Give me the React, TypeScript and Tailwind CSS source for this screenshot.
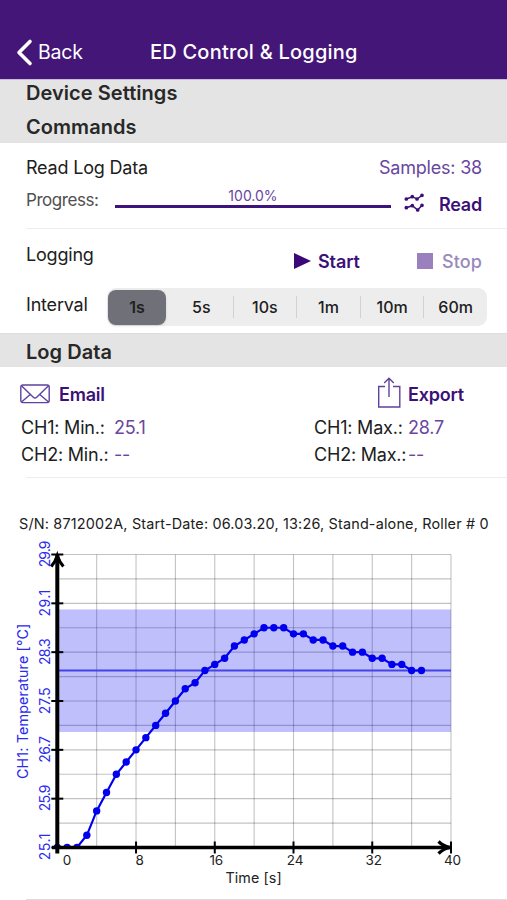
import React from "react";

const temps = [
  25.1, 25.1, 25.1, 25.3, 25.7, 26.0, 26.3, 26.5, 26.7, 26.9, 27.1, 27.3, 27.5,
  27.7, 27.8, 28.0, 28.1, 28.2, 28.4, 28.5, 28.6, 28.7, 28.7, 28.7, 28.6, 28.6,
  28.5, 28.5, 28.4, 28.4, 28.3, 28.3, 28.2, 28.2, 28.1, 28.1, 28.0, 28.0,
];

// Chart space: origin at (57.3, 307.5), 393.7 wide and 293 high
const px = (t: number) => 57.3 + t * 9.842;
const py = (v: number) => 307.5 - (v - 25.1) * 61.04;

function Chart() {
  const points = temps.map((v, i) => `${px(i)},${py(v)}`).join(" ");
  const yTicks = [25.1, 25.9, 26.7, 27.5, 28.3, 29.1, 29.9];
  const yLabelCenters = [307, 258, 209.5, 161, 111.8, 63.3, 14];
  const xLabels = [
    [0, 67],
    [8, 139.5],
    [16, 216.3],
    [24, 295],
    [32, 373.7],
    [40, 452.5],
  ];
  return (
    <svg width="507" height="359" viewBox="0 0 507 359" className="block font-['Inter',sans-serif]">
      <g stroke="#000" strokeOpacity="0.24" strokeWidth="1.1">
        {Array.from({ length: 10 }, (_, i) => (
          <line key={i} x1={px(4 * (i + 1))} x2={px(4 * (i + 1))} y1="14.5" y2="307" />
        ))}
        {Array.from({ length: 12 }, (_, i) => (
          <line key={i} x1="57" x2="451" y1={py(25.5 + 0.4 * i)} y2={py(25.5 + 0.4 * i)} />
        ))}
      </g>
      <rect x="57.3" y={py(29)} width="393.7" height="122.5" fill="#0000f0" fillOpacity="0.25" />
      <line x1="57.3" x2="451" y1={py(28)} y2={py(28)} stroke="#4444e8" strokeWidth="1.8" />
      <clipPath id="plot">
        <rect x="52" y="0" width="410" height="308.5" />
      </clipPath>
      <g clipPath="url(#plot)" fill="#0000ee">
        <polyline points={points} fill="none" stroke="#0000ee" strokeWidth="2.2" />
        {temps.map((v, i) => (
          <circle key={i} cx={px(i)} cy={py(v)} r="3.7" />
        ))}
      </g>
      <g stroke="#000" fill="none">
        <path d="M57.3 313.5V15" strokeWidth="4" />
        <path d="M52 307.5H450" strokeWidth="3.6" />
        <path d="M51.2 26.5Q55.5 21.5 57.3 16Q59.1 21.5 63.4 26.5" strokeWidth="3.2" />
        <path d="M54.5 20L57.3 14.5L60.1 20Z" fill="#000" />
        <path d="M438.5 301.5Q443 306 450 307.5Q443 309 438.5 313.5" strokeWidth="3.2" />
        {yTicks.map((v) => (
          <path key={v} d={`M51.3 ${py(v)}H63.3`} strokeWidth="2" />
        ))}
        {[8, 16, 24, 32, 40].map((t) => (
          <path key={t} d={`M${px(t)} 301.5V313.5`} strokeWidth="2" />
        ))}
      </g>
      <g fontSize="13.5" fill="#222" textAnchor="middle">
        {xLabels.map(([n, x]) => (
          <text key={n} x={x} y="324.8">{n}</text>
        ))}
        <text x="253.5" y="343.3" fontSize="14.3" textLength="56">Time [s]</text>
      </g>
      <g fill="#2a2af0" textAnchor="middle">
        {yTicks.map((v, i) => (
          <text key={v} fontSize="14" textLength="26.5" transform={`translate(50 ${yLabelCenters[i]}) rotate(-90)`}>
            {v.toFixed(1)}
          </text>
        ))}
        <text fontSize="14.3" textLength="155" transform="translate(28 161.5) rotate(-90)">CH1: Temperature [°C]</text>
      </g>
    </svg>
  );
}

const intervals = ["5s", "10s", "1m", "10m", "60m"];

export default function App() {
  return (
    <div className="flex h-[900px] w-[507px] flex-col overflow-hidden bg-white font-['Inter',sans-serif] text-[18px] tracking-[-0.2px] whitespace-nowrap text-[#202020]">
      <header className="flex h-[79px] shrink-0 items-start bg-[#441678] pt-[37px] pl-4 text-white">
        <svg width="18" height="30" viewBox="0 0 18 30" fill="none" stroke="white" strokeWidth="3.6" strokeLinecap="round" strokeLinejoin="round">
          <path d="M14 4.5L3 15.5L14 26.5" />
        </svg>
        <span className="ml-1 w-[112px] text-[19.5px] leading-[31px] tracking-[-0.2px]">Back</span>
        <h1 className="text-[20px] leading-[31px] font-medium tracking-[0.22px]">ED Control &amp; Logging</h1>
      </header>
      <div className="h-[64px] shrink-0 border-t border-[#c9b8da] bg-[#e4e4e4] pl-[26px] text-[20px] font-semibold tracking-[0.05px] text-[#282828]">
        <div className="-mt-[4px] h-[34px] leading-[34px]">Device Settings</div>
        <div className="h-[34px] leading-[34px]">Commands</div>
      </div>

      <section className="flex h-[190px] shrink-0 flex-col">
        <div className="ml-[26px] flex h-[86px] flex-col border-b border-[#ededed] pr-[25px]">
          <div className="flex justify-between pt-[12px] leading-[26px]">
            <span>Read Log Data</span>
            <span className="text-[#6a46a0]">Samples: 38</span>
          </div>
          <div className="flex pt-[6px]">
            <span className="w-[89px] text-[17px] leading-[26px] tracking-[-0.45px] text-[#505050]">Progress:</span>
            <div className="h-[21px] w-[276px] border-b-[3px] border-[#3d147c] text-center text-[14px] leading-[17px] tracking-normal text-[#6a46a0]">100.0%</div>
            <svg className="mt-[5px] ml-[13px]" width="22" height="22" viewBox="0 0 22 22" fill="#3c1077" stroke="#3c1077" strokeWidth="1.5">
              <path d="M2.3 7L8.3 4.7L13 7L18 3.3M2.3 15.7L8.3 13.7L13.7 18L18 13.3" fill="none" />
              {[[2.3, 7], [8.3, 4.7], [13, 7], [18, 3.3], [2.3, 15.7], [8.3, 13.7], [13.7, 18], [18, 13.3]].map(([x, y]) => (
                <circle key={`${x}-${y}`} cx={x} cy={y} r="1.1" />
              ))}
            </svg>
            <span className="ml-auto pt-[5px] leading-[26px] font-semibold text-[#3c1077]">Read</span>
          </div>
        </div>
        <div className="flex h-[57px] pl-[26px]">
          <span className="w-[268px] pt-[13px] leading-[26px]">Logging</span>
          <div className="flex items-start pt-5 leading-[26px] font-semibold tracking-[-0.1px] text-[#3c1077]">
            <svg className="mt-[4px]" width="17" height="16" viewBox="0 0 17 16" fill="#3c0878"><path d="M0 0L17 8L0 16Z" /></svg>
            <span className="ml-[7px] w-[99px]">Start</span>
            <span className="mt-[4px] h-4 w-4 bg-[#9a80bc]" />
            <span className="ml-[9px] font-medium tracking-[0.1px] text-[#9a88bc]">Stop</span>
          </div>
        </div>
        <div className="flex pl-[26px]">
          <span className="w-[81px] pt-[6px] leading-[26px]">Interval</span>
          <div className="mt-[2px] flex h-[38px] w-[380px] items-center rounded-[9px] bg-[#ededee] text-[16px] font-medium tracking-normal">
            <div className="w-[63px] pl-[1px]">
              <span className="flex h-[35px] w-[58px] items-center justify-center rounded-[8px] bg-[#707178] font-semibold shadow">1s</span>
            </div>
            {intervals.map((label, i) => (
              <span key={label} className={`flex h-[22px] flex-1 items-center justify-center ${i > 0 ? "border-l border-[#d2d2d4]" : ""}`}>{label}</span>
            ))}
          </div>
        </div>
      </section>

      <div className="h-[34px] shrink-0 border-t border-[#dddddd] bg-[#e4e4e4] pl-[26px] text-[20px] leading-[36px] font-semibold tracking-[0.05px] text-[#282828]">Log Data</div>

      <section className="h-[110px] shrink-0">
        <div className="flex h-[47px] items-start pt-[9px] pl-[20px] leading-[37px] font-semibold text-[#3c1077]">
          <svg className="mt-[8px]" width="30" height="20" viewBox="0 0 30 20" fill="none" stroke="#6040a0" strokeWidth="1.4">
            <rect x="0.8" y="1" width="28.4" height="17.6" rx="2" />
            <path d="M1.5 1.8L13.3 13.2Q15 14.8 16.7 13.2L28.5 1.8M1.5 18L10.5 10.3M28.5 18L19.5 10.3" />
          </svg>
          <span className="ml-[9px] w-[318px]">Email</span>
          <svg className="mt-[1px]" width="24" height="32" viewBox="0 0 24 32" fill="none" stroke="#6040a0" strokeWidth="1.4">
            <path d="M8 9.5H1.7V30H22.8V9.5H16M12 20V1.5M7.2 6L12 1.2L16.8 6" />
          </svg>
          <span className="ml-[7px]">Export</span>
        </div>
        <div className="grid grid-cols-[92px_201px_94px_1fr] pl-[21px] leading-[27px]">
          <span>CH1: Min.:</span><span className="ml-[1px] text-[#6a46a0]">25.1</span>
          <span>CH1: Max.:</span><span className="text-[#6a46a0]">28.7</span>
          <span>CH2: Min.:</span><span className="ml-[1px] text-[#6a46a0]">--</span>
          <span>CH2: Max.:</span><span className="text-[#6a46a0]">--</span>
        </div>
      </section>
      <section className="shrink-0">
        <div className="ml-[26px] h-[37px] border-t border-[#ededed]" />
        <p className="h-[26px] pl-[19px] text-[14.4px] leading-[20px] tracking-[0.18px]">S/N: 8712002A, Start-Date: 06.03.20, 13:26, Stand-alone, Roller # 0</p>
        <Chart />
        <div className="ml-[26px] h-px bg-[#dcdcdc]" />
      </section>
    </div>
  );
}
